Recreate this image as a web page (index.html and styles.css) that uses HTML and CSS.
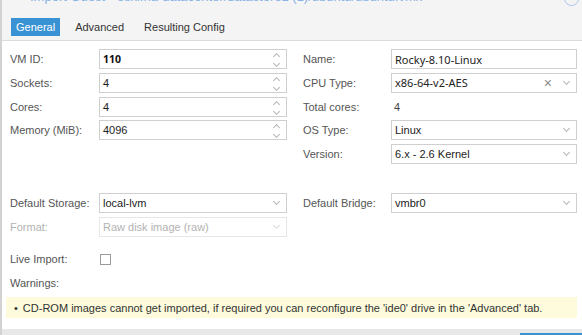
FILE: index.html
```html
<!DOCTYPE html>
<html lang="en">
<head>
  <meta charset="UTF-8">
  <title>Import Guest</title>
  <link rel="stylesheet" href="styles.css">
</head>
<body>

  <div class="window">
    <div class="title-strip">
      <span class="title">Import Guest - esxi:ha-datacenter/datastore1 (1)/ubuntu/ubuntu.vmx</span>
      <span class="close-btn"></span>
    </div>

    <div class="tabbar">
      <span class="tab active">General</span>
      <span class="tab">Advanced</span>
      <span class="tab">Resulting Config</span>
    </div>

    <div class="panel">
      <div class="columns">
        <div class="col col-left">
          <div class="row">
            <span class="label">VM ID:</span>
            <div class="field"><span class="value bold">110</span><span class="spin"><i class="up"></i><i class="down"></i></span></div>
          </div>
          <div class="row">
            <span class="label">Sockets:</span>
            <div class="field"><span class="value">4</span><span class="spin"><i class="up"></i><i class="down"></i></span></div>
          </div>
          <div class="row">
            <span class="label">Cores:</span>
            <div class="field"><span class="value">4</span><span class="spin"><i class="up"></i><i class="down"></i></span></div>
          </div>
          <div class="row">
            <span class="label">Memory (MiB):</span>
            <div class="field"><span class="value">4096</span><span class="spin"><i class="up"></i><i class="down"></i></span></div>
          </div>
        </div>

        <div class="col col-right">
          <div class="row">
            <span class="label">Name:</span>
            <div class="field"><span class="value alt">Rocky-8.10-Linux</span></div>
          </div>
          <div class="row">
            <span class="label">CPU Type:</span>
            <div class="field"><span class="value alt">x86-64-v2-AES</span><span class="clear">&times;</span><span class="chevron"></span></div>
          </div>
          <div class="row">
            <span class="label">Total cores:</span>
            <span class="plain">4</span>
          </div>
          <div class="row">
            <span class="label">OS Type:</span>
            <div class="field"><span class="value">Linux</span><span class="chevron"></span></div>
          </div>
          <div class="row">
            <span class="label">Version:</span>
            <div class="field"><span class="value">6.x - 2.6 Kernel</span><span class="chevron"></span></div>
          </div>
        </div>
      </div>

      <div class="columns storage">
        <div class="col col-left">
          <div class="row">
            <span class="label">Default Storage:</span>
            <div class="field"><span class="value">local-lvm</span><span class="chevron"></span></div>
          </div>
          <div class="row disabled">
            <span class="label">Format:</span>
            <div class="field"><span class="value">Raw disk image (raw)</span><span class="chevron"></span></div>
          </div>
        </div>
        <div class="col col-right">
          <div class="row">
            <span class="label">Default Bridge:</span>
            <div class="field"><span class="value">vmbr0</span><span class="chevron"></span></div>
          </div>
        </div>
      </div>

      <div class="row live">
        <span class="label">Live Import:</span>
        <span class="checkbox"></span>
      </div>

      <div class="row warn-label">
        <span class="label">Warnings:</span>
      </div>

      <ul class="warnings">
        <li>CD-ROM images cannot get imported, if required you can reconfigure the 'ide0' drive in the 'Advanced' tab.</li>
      </ul>
    </div>

    <div class="footer">
      <span class="btn-primary"></span>
    </div>
  </div>

</body>
</html>
```

FILE: styles.css
```css
body {
  margin: 0;
  background-color: #ffffff;
  font-family: "Liberation Sans", Arial, sans-serif;
  font-size: 11px;
  color: #333333;
}

.window {
  height: 335px;
  overflow: hidden;
  border-left: 2px solid #d2d2d2;
  display: flex;
  flex-direction: column;
}

/* header */

.title-strip {
  height: 7px;
  overflow: hidden;
  background-color: #f4f4f4;
  display: flex;
  justify-content: space-between;
}

.title {
  margin: -10px 0 0 28px;
  font-size: 13px;
  line-height: 14px;
  color: #86b2e8;
  white-space: nowrap;
}

.close-btn {
  width: 13px;
  height: 13px;
  margin: -9px 3px 0 0;
  border: 1.5px solid #a6c6ec;
  border-radius: 50%;
}

.tabbar {
  height: 34px;
  box-sizing: border-box;
  background-color: #f4f4f4;
  border-bottom: 1px solid #dcdcdc;
  display: flex;
  align-items: flex-start;
  gap: 10px;
  padding: 11px 0 0 9px;
}

.tab {
  height: 18px;
  line-height: 18px;
  padding: 0 5px;
  font-size: 11px;
  color: #333333;
}

.tab.active {
  background-color: #3892d4;
  color: #ffffff;
}

/* form */

.panel {
  flex: 1;
  padding: 8px 5px 0 8px;
}

.columns {
  display: flex;
  gap: 16px;
}

.col-left {
  width: 277px;
}

.col-right {
  width: 274px;
}

.row {
  display: flex;
  align-items: center;
  height: 20px;
  margin-bottom: 3.75px;
}

.label {
  width: 89px;
  flex: none;
  color: #555555;
}

.col-right .label {
  width: 88px;
}

.field {
  flex: 1;
  height: 20px;
  box-sizing: border-box;
  border: 1px solid #cfcfcf;
  display: flex;
  align-items: center;
  padding: 0 6px 0 3px;
  background-color: #ffffff;
}

.value {
  flex: 1;
  white-space: nowrap;
  color: #222222;
}

.value.bold {
  font-family: "Noto Sans", sans-serif;
  font-weight: bold;
  font-size: 10.5px;
  color: #111111;
}

.value.alt {
  font-family: "Noto Sans", sans-serif;
  font-size: 11px;
}

.plain {
  padding-left: 3px;
  color: #444444;
}

.spin {
  display: flex;
  flex-direction: column;
  gap: 2px;
  margin-right: 1px;
}

.spin i {
  display: block;
  width: 4px;
  height: 4px;
  border-left: 1px solid #b5b5b5;
  border-top: 1px solid #b5b5b5;
}

.spin .up {
  transform: rotate(45deg);
  margin-top: 2px;
}

.spin .down {
  transform: rotate(225deg);
}

.chevron {
  width: 4px;
  height: 4px;
  border-right: 1px solid #b5b5b5;
  border-bottom: 1px solid #b5b5b5;
  transform: rotate(45deg);
  margin: -3px 1px 0 0;
}

.clear {
  font-size: 14px;
  color: #8a8a8a;
  margin-right: 12px;
  line-height: 1;
}

.storage {
  margin-top: 25px;
}

.disabled .label,
.disabled .value {
  color: #b3b3b3;
}

.disabled .field {
  border-color: #e6e6e6;
}

.disabled .chevron {
  border-color: #dddddd;
}

.live {
  margin-top: 9px;
}

.checkbox {
  width: 11px;
  height: 11px;
  box-sizing: border-box;
  border: 1px solid #9a9a9a;
  margin-left: 1px;
}

.warn-label {
  margin-top: 1px;
}

.warnings {
  list-style: none;
  margin: 0 0 0 -4px;
  padding: 0 0 0 8px;
  height: 21px;
  line-height: 22px;
  background-color: #fdfbdc;
  width: 563px;
  font-size: 11px;
}

.warnings li::before {
  content: "\2022";
  margin-right: 5px;
}

/* footer */

.footer {
  height: 6px;
  background-color: #e8e8e8;
  position: relative;
}

.btn-primary {
  position: absolute;
  left: 518px;
  top: 4px;
  width: 70px;
  height: 10px;
  background-color: #3892d4;
}
```
